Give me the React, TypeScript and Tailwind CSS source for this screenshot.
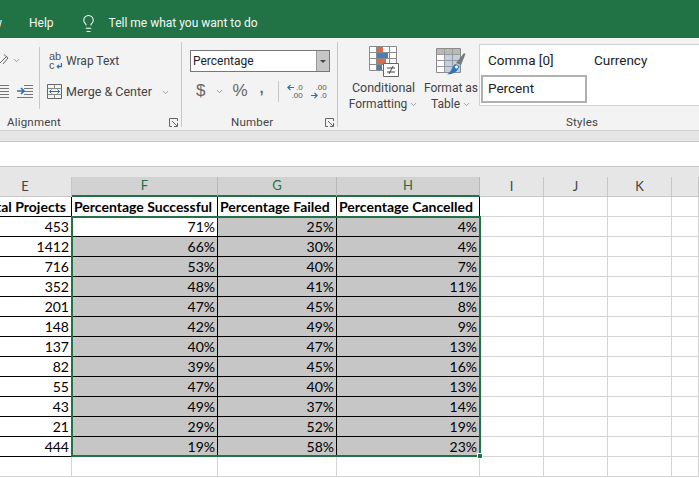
import { ChevronDown, Lightbulb } from "lucide-react";

const rows = [
  ["453", "71%", "25%", "4%"],
  ["1412", "66%", "30%", "4%"],
  ["716", "53%", "40%", "7%"],
  ["352", "48%", "41%", "11%"],
  ["201", "47%", "45%", "8%"],
  ["148", "42%", "49%", "9%"],
  ["137", "40%", "47%", "13%"],
  ["82", "39%", "45%", "16%"],
  ["55", "47%", "40%", "13%"],
  ["43", "49%", "37%", "14%"],
  ["21", "29%", "52%", "19%"],
  ["444", "19%", "58%", "23%"],
];

const gridCols = "grid grid-cols-[72px_146px_119px_143px_64px_64px_64px_27px]";
const uiFont = "font-['Roboto','Open_Sans',sans-serif]";
const cellFont = "font-['Lato','Liberation_Sans',sans-serif]";

function Chevron({ className }: { className: string }) {
  return <ChevronDown size={9} strokeWidth={1.6} className={`shrink-0 text-[#666] ${className}`} />;
}

function Launcher() {
  return (
    <svg width="9" height="9" viewBox="0 0 9 9" fill="none" stroke="#666">
      <path d="M8.5 3V.5H.5v8H3" />
      <path d="M3 3l5 5M8.5 5v3.5H5" />
    </svg>
  );
}

function Lines({ rows = 5, color = "#777" }: { rows?: number; color?: string }) {
  return (
    <svg width="9" height="13" viewBox="0 0 9 13" stroke={color}>
      {Array.from({ length: rows }, (_, i) => (
        <path key={i} d={`M0 ${i * 3 + 0.5}h9`} />
      ))}
    </svg>
  );
}

function OrientationIcon() {
  return (
    <svg width="9" height="13" viewBox="0 0 9 13" fill="none" stroke="#666">
      <path d="M-2 11l3-3 6-6M4 .5l4 3.5-5 6" />
    </svg>
  );
}

function IndentIcon() {
  return (
    <svg width="16" height="13" viewBox="0 0 16 13" fill="none">
      <path d="M7 .5h9M7 3.5h9M7 6.5h9M7 9.5h9M0 12.5h16" stroke="#777" />
      <path d="M0 6h6M4 3l3 3-3 3" stroke="#2b6fb3" strokeWidth="1.6" />
    </svg>
  );
}

function WrapIcon() {
  return (
    <div className="relative h-[18px] w-[13px] font-['Liberation_Sans',sans-serif] text-[11px] leading-[9px] text-[#555]">
      <span className="block">ab</span>
      <span className="block">c</span>
      <svg width="6" height="6" viewBox="0 0 5 5" fill="none" stroke="#2b6fb3" className="absolute right-0 bottom-[1px]">
        <path d="M4.5 0v3H1M2.500 1.500L1 3l1.500 1.500" />
      </svg>
    </div>
  );
}

function MergeIcon() {
  return (
    <svg width="16" height="16" viewBox="0 0 16 16" fill="none">
      <path d="M.5.500h14v14H.5z" stroke="#666" />
      <path d="M.5 4.500h14M.5 10.500h14M7.500.500v4M7.500 10.500v4" stroke="#888" />
      <path d="M2.500 7.500h10M4.500 5.500l-2 2 2 2M10.500 5.500l2 2-2 2" stroke="#2b6fb3" />
    </svg>
  );
}

function DecimalIcon({ flip }: { flip?: boolean }) {
  return (
    <div className="relative h-[15px] w-[16px] font-['Liberation_Sans',sans-serif] text-[8px] leading-[7px] text-[#555]">
      <span className="absolute top-0 right-0">{flip ? ".00" : ".0"}</span>
      <span className="absolute right-0 bottom-0">{flip ? ".0" : ".00"}</span>
      <svg
        width="7"
        height="7"
        viewBox="0 0 8 7"
        fill="none"
        stroke="#2b6fb3"
        strokeWidth="1.400"
        className={`absolute left-0 ${flip ? "bottom-0" : "top-0"}`}
      >
        {flip ? <path d="M0 3.500h7M4 .5l3 3-3 3" /> : <path d="M8 3.500H1M4 .5l-3 3 3 3" />}
      </svg>
    </div>
  );
}

function ConditionalIcon() {
  return (
    <svg width="30" height="31" viewBox="0 0 30 31" fill="none">
      <path d="M.5.500h27v24H.5z" fill="#fff" stroke="#8a8a8a" />
      <path d="M8 1h6v5H8z" fill="#dc6a4c" />
      <path d="M8 7h11v5H8z" fill="#4a7ebb" />
      <path d="M8 13h9v5H8z" fill="#dc6a4c" />
      <path d="M8 19h5v5H8z" fill="#4a7ebb" />
      <path d="M.5 6.500h27M.5 12.500h27M.5 18.500h27M7.500.500v24M20.500.500v24" stroke="#8a8a8a" />
      <path d="M14.500 17.500h15v13h-15z" fill="#fff" stroke="#666" />
      <path d="M18 22h8M18 26h8M24 20l-4 8" stroke="#444" />
    </svg>
  );
}

function TableIcon() {
  return (
    <svg width="30" height="31" viewBox="0 0 30 31" fill="none">
      <path d="M.5 2.500h24v24H.5z" fill="#fff" stroke="#8a8a8a" />
      <path d="M1 3h23v6H1z" fill="#b9b9b9" />
      <path d="M8 9h16v17H8z" fill="#bdd0e6" />
      <path d="M.5 8.500h24M.5 14.500h24M.5 20.500h24M8.500 2.500v24M16.500 2.500v24" stroke="#9a9a9a" />
      <path d="M20 17L28 7l1.500 1-4.500 11z" fill="#7a7a7a" />
      <path d="M19 18l4 2.500c-1 5-6 8-12 8 4-2 5-7 8-10.500z" fill="#2f75b5" />
      <circle cx="20.500" cy="21" r="2" fill="#fff" stroke="#2f75b5" />
    </svg>
  );
}

function Separator({ className }: { className: string }) {
  return <div className={`w-px bg-[#c8c8c8] ${className}`} />;
}

function GroupLabel({ label, center, launcher }: { label: string; center: string; launcher?: boolean }) {
  return (
    <div className="flex h-[16px] items-center justify-between text-[11.500px] tracking-[0.2px] text-[#444]">
      <span className={`pt-[2px] ${center}`}>{label}</span>
      {launcher && (
        <span className="mr-[3px] flex">
          <Launcher />
        </span>
      )}
    </div>
  );
}

function TitleBar() {
  return (
    <div className={`flex h-[38px] items-center bg-[#217346] pt-[8px] text-[12px] text-[#f4f8f5] ${uiFont}`}>
      <span className="flex w-[2px] justify-end overflow-hidden">View</span>
      <span className="ml-[27px]">Help</span>
      <Lightbulb size={19} strokeWidth={1.300} className="ml-[25px] text-white" />
      <span className="ml-[11px]">Tell me what you want to do</span>
    </div>
  );
}

function Ribbon() {
  return (
    <div className={`flex h-[93px] border-b border-[#d2d2d2] bg-[#f3f3f3] text-[12.500px] text-[#444] ${uiFont}`}>
      <div className="flex w-[181px] flex-col">
        <div className="flex h-[74px] pt-[5px]">
          <div className="flex w-[39px] flex-col gap-[18px] pt-[11px]">
            <div className="flex items-center">
              <OrientationIcon />
              <Chevron className="ml-[3px]" />
            </div>
            <div className="flex items-center gap-[8px]">
              <Lines />
              <IndentIcon />
            </div>
          </div>
          <Separator className="mt-[4px] mb-[3px]" />
          <div className="flex flex-col gap-[15px] pl-[7px] pt-[9px]">
            <div className="flex h-[17px] items-center gap-[4px] pl-[2px]">
              <WrapIcon />
              <span className="text-[12px]">Wrap Text</span>
            </div>
            <div className="flex h-[16px] items-center">
              <MergeIcon />
              <span className="ml-[3px]">Merge &amp; Center</span>
              <Chevron className="ml-[9px]" />
            </div>
          </div>
        </div>
        <div className="mt-[2px]">
          <GroupLabel label="Alignment" center="ml-[7px]" launcher />
        </div>
      </div>
      <Separator className="mt-[4px] mb-[3px]" />

      <div className="flex w-[155px] flex-col">
        <div className="h-[76px] pt-[12px] pl-[8px]">
          <div className="flex h-[22px] w-[140px] items-center justify-between border border-[#777] bg-white pl-[2px]">
            <span className="text-[12px] text-[#222]">Percentage</span>
            <div className="flex h-full w-[13px] items-center justify-center border-l border-[#999] bg-[#c6c6c6]">
              <div className="border-x-[3px] border-t-[3px] border-x-transparent border-t-[#444]" />
            </div>
          </div>
          <div className="flex h-[28px] items-center pt-[10px] text-[#666]">
            <span className="ml-[6px] font-['Liberation_Sans',sans-serif] text-[17px]">$</span>
            <Chevron className="ml-[10px]" />
            <span className="ml-[8px] font-['Liberation_Sans',sans-serif] text-[17px]">%</span>
            <span className="-mt-[8px] ml-[12px] font-['Liberation_Sans',sans-serif] text-[15px] font-bold leading-none">,</span>
            <Separator className="ml-[14px] h-[21px]" />
            <div className="ml-[8px]">
              <DecimalIcon />
            </div>
            <div className="ml-[8px]">
              <DecimalIcon flip />
            </div>
          </div>
        </div>
        <GroupLabel label="Number" center="ml-[49px]" launcher />
      </div>
      <Separator className="mt-[4px] mb-[3px]" />

      <div className="flex min-w-0 flex-1 flex-col">
        <div className="flex h-[76px]">
          <div className="flex w-[141px] shrink-0 pt-[8px] text-center leading-[16px]">
            <div className="flex w-[77px] flex-col items-center pl-[14px]">
              <ConditionalIcon />
              <span className="mt-[3px] whitespace-nowrap">Conditional</span>
              <span className="flex items-center whitespace-nowrap text-[12px]">
                Formatting
                <Chevron className="ml-[2px]" />
              </span>
            </div>
            <div className="flex w-[62px] flex-col items-center pl-[10px] text-[12px]">
              <TableIcon />
              <span className="mt-[3px] whitespace-nowrap">Format as</span>
              <span className="flex items-center whitespace-nowrap">
                Table
                <Chevron className="ml-[2px]" />
              </span>
            </div>
          </div>
          <div className="mt-[6px] h-[62px] flex-1 border border-r-0 border-[#d2d2d2] bg-white pl-[1px] text-[13.500px] text-[#222]">
            <div className="flex h-[30px] items-center pl-[7px]">
              <span className="w-[106px]">Comma [0]</span>
              <span>Currency</span>
            </div>
            <div className="flex h-[28px] w-[106px] items-center border-2 border-[#b0b0b0] pb-[2px] pl-[5px]">Percent</div>
          </div>
        </div>
        <GroupLabel label="Styles" center="ml-[228px]" />
      </div>
    </div>
  );
}

function FormulaBar() {
  return (
    <>
      <div className="h-[10px] bg-[#e6e6e6]" />
      <div className="h-[26px] border-y border-[#c6c6c6] bg-white" />
      <div className="h-[10px] bg-[#e6e6e6]" />
    </>
  );
}

function HeaderCell({ label, selected, className = "" }: { label: string; selected?: boolean; className?: string }) {
  return (
    <div
      className={`flex h-[20px] items-center justify-center border-r text-[13px] ${className} ${
        selected
          ? "border-b-2 border-r-[#b8b8b8] border-b-[#217346] bg-[#d2d2d2] text-[#217346]"
          : "border-b border-[#c6c6c6] bg-[#e6e6e6] text-[#444]"
      }`}
    >
      {label}
    </div>
  );
}

function Cell({
  value,
  fill,
  bold,
  left,
  className = "",
}: {
  value?: string;
  fill?: boolean;
  bold?: boolean;
  left?: boolean;
  className?: string;
}) {
  return (
    <div
      className={`flex h-[20px] items-center overflow-hidden whitespace-nowrap border-r border-b border-black pr-[2px] pt-[1px] leading-none text-black ${
        left ? "justify-start pl-[2px]" : "justify-end"
      } ${fill ? "bg-[#c6c6c6]" : "bg-white"} ${bold ? "font-bold" : ""} ${className}`}
    >
      {value}
    </div>
  );
}

function Blank() {
  return <div className="h-[20px] border-r border-b border-[#d4d4d4] bg-white" />;
}

function Sheet() {
  return (
    <div className={`relative text-[14px] ${cellFont}`}>
      <div className={gridCols}>
        <HeaderCell label="E" className="pr-[21px]" />
        <HeaderCell label="F" selected />
        <HeaderCell label="G" selected />
        <HeaderCell label="H" selected />
        <HeaderCell label="I" />
        <HeaderCell label="J" />
        <HeaderCell label="K" />
        <HeaderCell label="" />

        <Cell value="Total Projects" bold className="pr-[5px]" />
        <Cell value="Percentage Successful" bold left />
        <Cell value="Percentage Failed" bold left />
        <Cell value="Percentage Cancelled" bold left />
        <Blank />
        <Blank />
        <Blank />
        <Blank />

        {rows.map((r, i) => (
          <div key={i} className="contents">
            <Cell value={r[0]} />
            <Cell value={r[1]} fill={i > 0} />
            <Cell value={r[2]} fill />
            <Cell value={r[3]} fill />
            <Blank />
            <Blank />
            <Blank />
            <Blank />
          </div>
        ))}

        {Array.from({ length: 8 }, (_, i) => (
          <Blank key={i} />
        ))}
      </div>
      {/* selection box sits over the cells */}
      <div className="pointer-events-none absolute top-[39px] left-[71px] h-[241px] w-[410px] border-2 border-[#217346]">
        <div className="absolute -right-[4px] -bottom-[4px] h-[6px] w-[6px] border border-white bg-[#217346]" />
      </div>
    </div>
  );
}

export default function App() {
  return (
    <div className="h-[478px] w-[699px] overflow-hidden bg-white">
      <TitleBar />
      <Ribbon />
      <FormulaBar />
      <Sheet />
    </div>
  );
}
